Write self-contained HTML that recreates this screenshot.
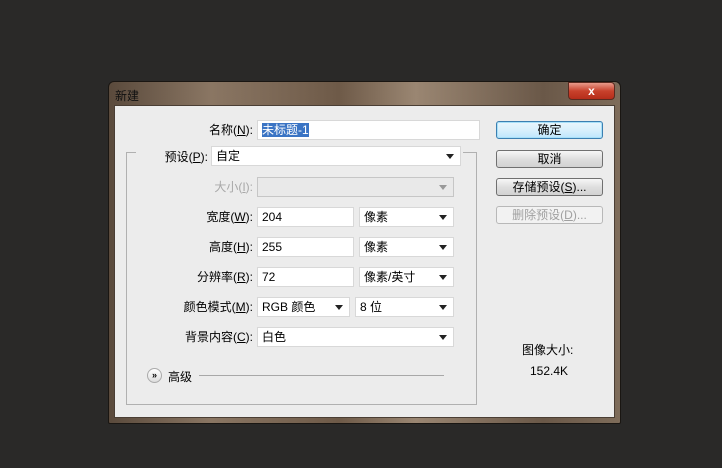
<!DOCTYPE html>
<html><head><meta charset="utf-8"><style>
*{margin:0;padding:0;box-sizing:border-box}
body{width:722px;height:468px;background:#2a2928;position:relative;overflow:hidden;font-family:"Liberation Sans","Noto Sans CJK SC",sans-serif;font-size:12px;color:#000}
.a{position:absolute}
.dlg{left:108px;top:81px;width:513px;height:343px;border-radius:6px 6px 2px 2px;background:linear-gradient(90deg,#5a4a3c,#8a7663 20%,#6e5a48 45%,#9a8672 60%,#6a5848 85%,#7e6c5a);border:1px solid #1a1612}
.client{left:114px;top:105px;width:501px;height:313px;background:#ececec;border:1px solid #4a3e34}
.lbl{text-align:right;width:140px;font-size:12px;line-height:20px}
.in{background:#fff;border:1px solid #d8d8d8;height:20px;line-height:18px;padding-left:4px;font-size:12px}
.dis{background:#e9e9e9;border:1px solid #c6c6c6}
.arr{position:absolute;right:6px;top:7px;width:0;height:0;border-left:4px solid transparent;border-right:4px solid transparent;border-top:5px solid #222}
.btn{width:107px;height:18px;border:1px solid #707070;border-radius:3px;background:linear-gradient(#f6f6f6,#dedede 50%,#d2d2d2);text-align:center;line-height:16px;font-size:12px}
</style></head><body>
<div class="a dlg"></div>
<div class="a" style="left:115px;top:87px;color:#111;font-size:12px">新建</div>
<div class="a" style="left:568px;top:82px;width:47px;height:18px;border-radius:0 4px 4px 4px;background:linear-gradient(#e89a8a,#c8412c 50%,#b52d1a);border:1px solid #5a2a20;color:#fff;text-align:center;font-weight:bold;font-size:12px;line-height:16px">x</div>
<div class="a client"></div>
<div class="a" style="left:126px;top:152px;width:351px;height:253px;border:1px solid #b0b0b0;border-top:none"></div>
<div class="a" style="left:126px;top:152px;width:10px;border-top:1px solid #b0b0b0"></div>
<div class="a" style="left:463px;top:152px;width:14px;border-top:1px solid #b0b0b0"></div>

<div class="a lbl" style="left:113px;top:120px">名称(<u>N</u>):</div>
<div class="a in" style="left:257px;top:120px;width:223px"><span style="background:#3a74c4;color:#fff">未标题-1</span></div>
<div class="a lbl" style="left:68px;top:147px">预设(<u>P</u>):</div>
<div class="a in" style="left:211px;top:146px;width:250px">自定<span class="arr"></span></div>
<div class="a lbl" style="left:113px;top:177px;color:#a8a8a8">大小(<u>I</u>):</div>
<div class="a in dis" style="left:257px;top:177px;width:197px"><span class="arr" style="border-top-color:#999"></span></div>
<div class="a lbl" style="left:113px;top:207px">宽度(<u>W</u>):</div>
<div class="a in" style="left:257px;top:207px;width:97px">204</div>
<div class="a in" style="left:359px;top:207px;width:95px">像素<span class="arr"></span></div>
<div class="a lbl" style="left:113px;top:237px">高度(<u>H</u>):</div>
<div class="a in" style="left:257px;top:237px;width:97px">255</div>
<div class="a in" style="left:359px;top:237px;width:95px">像素<span class="arr"></span></div>
<div class="a lbl" style="left:113px;top:267px">分辨率(<u>R</u>):</div>
<div class="a in" style="left:257px;top:267px;width:97px">72</div>
<div class="a in" style="left:359px;top:267px;width:95px">像素/英寸<span class="arr"></span></div>
<div class="a lbl" style="left:113px;top:297px">颜色模式(<u>M</u>):</div>
<div class="a in" style="left:257px;top:297px;width:93px">RGB 颜色<span class="arr"></span></div>
<div class="a in" style="left:355px;top:297px;width:99px">8 位<span class="arr"></span></div>
<div class="a lbl" style="left:113px;top:327px">背景内容(<u>C</u>):</div>
<div class="a in" style="left:257px;top:327px;width:197px">白色<span class="arr"></span></div>

<div class="a" style="left:147px;top:368px;width:15px;height:15px;border-radius:50%;border:1px solid #aaa;background:linear-gradient(#fff,#ddd);font-size:9px;text-align:center;line-height:13px;font-weight:bold">»</div>
<div class="a" style="left:168px;top:368px">高级</div>
<div class="a" style="left:199px;top:375px;width:245px;border-top:1px solid #a8a8a8"></div>

<div class="a btn" style="left:496px;top:121px;border-color:#3c7fb1;box-shadow:inset 0 0 0 1px #a8e0f8;background:linear-gradient(#eaf6fd,#d9f0fc 50%,#bee6fd)">确定</div>
<div class="a btn" style="left:496px;top:150px">取消</div>
<div class="a btn" style="left:496px;top:178px">存储预设(<u>S</u>)...</div>
<div class="a btn" style="left:496px;top:206px;color:#a0a0a0;border-color:#b8b8b8;background:#f2f2f2">删除预设(<u>D</u>)...</div>
<div class="a" style="left:522px;top:341px">图像大小:</div>
<div class="a" style="left:530px;top:364px">152.4K</div>
</body></html>
